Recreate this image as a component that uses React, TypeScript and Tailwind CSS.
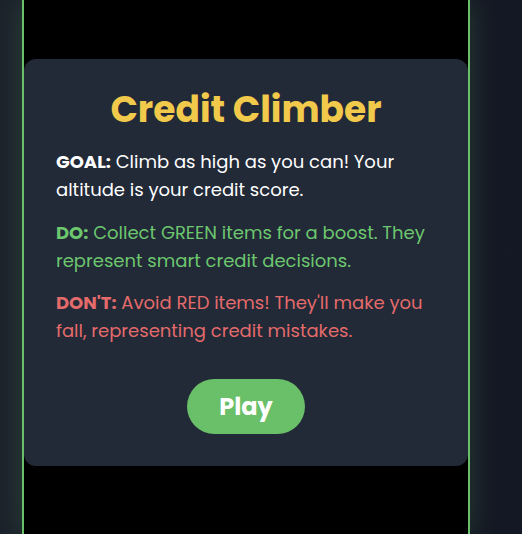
import React from 'react';

const App: React.FC = () => {
    return (
        <div
            className="w-[522px] h-[534px] overflow-hidden bg-gradient-to-r from-[#1b212b] via-[#181d28] to-[#141824] flex"
            style={{ fontFamily: "'Poppins', 'Open Sans', 'Noto Sans', sans-serif" }}
        >
            {/* Game canvas */}
            <div className="ml-[22px] w-[448px] h-full bg-black border-x-2 border-[#6abf69] shadow-[0_0_28px_rgba(106,191,105,0.22)] pt-[59px]">
                {/* Start card */}
                <div className="bg-[#222937] rounded-xl px-8 pt-[24px] pb-[32px] flex flex-col">
                    <h1 className="text-[36px] leading-[54px] font-bold text-[#f2ca4b] text-center">
                        Credit Climber
                    </h1>
                    <p className="mt-[11px] text-[18px] leading-[28px] text-white">
                        <span className="font-bold">GOAL:</span> Climb as high as you can! Your altitude is your credit score.
                    </p>
                    <p className="mt-[15px] text-[18px] leading-[28px] text-[#6cc76e]">
                        <span className="font-bold">DO:</span> Collect GREEN items for a boost. They represent smart credit decisions.
                    </p>
                    <p className="mt-[14px] text-[18px] leading-[28px] text-[#e46b6b]">
                        <span className="font-bold">DON'T:</span> Avoid RED items! They'll make you fall, representing credit mistakes.
                    </p>
                    <div className="mt-[34px] flex justify-center">
                        <button className="w-[118px] h-[55px] rounded-full bg-[#6abf69] text-white text-[24px] font-bold">
                            Play
                        </button>
                    </div>
                </div>
            </div>
        </div>
    );
};

export default App;
